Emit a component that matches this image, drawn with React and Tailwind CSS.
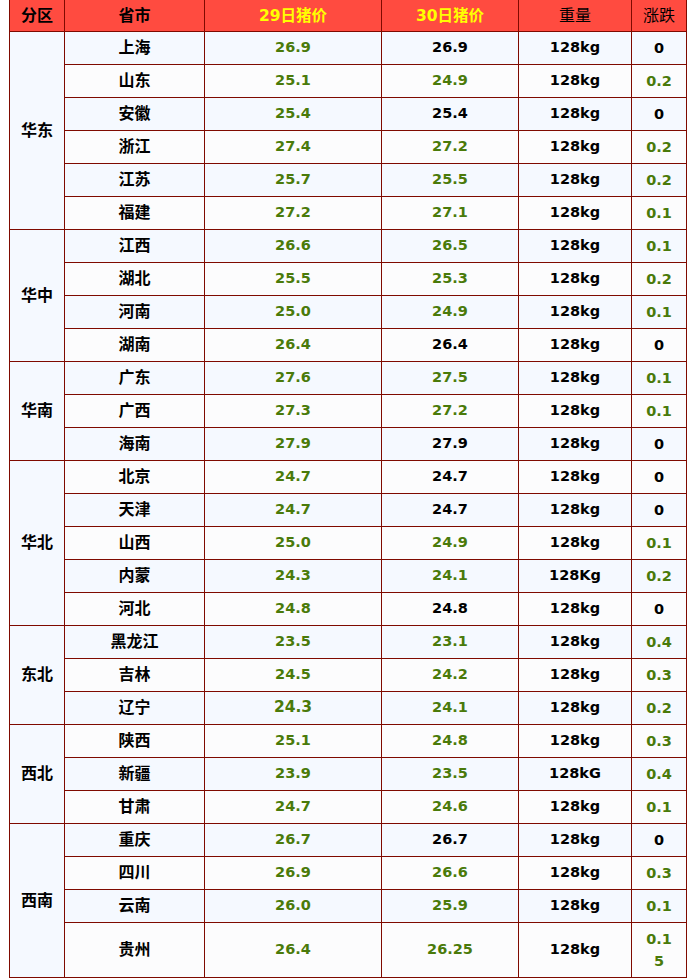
import React from "react";

const rows = [
  ["华东", 6, [
    ["上海", "26.9", "26.9", "128kg", "0", 0],
    ["山东", "25.1", "24.9", "128kg", "0.2", 1],
    ["安徽", "25.4", "25.4", "128kg", "0", 0],
    ["浙江", "27.4", "27.2", "128kg", "0.2", 1],
    ["江苏", "25.7", "25.5", "128kg", "0.2", 1],
    ["福建", "27.2", "27.1", "128kg", "0.1", 1],
  ]],
  ["华中", 4, [
    ["江西", "26.6", "26.5", "128kg", "0.1", 1],
    ["湖北", "25.5", "25.3", "128kg", "0.2", 1],
    ["河南", "25.0", "24.9", "128kg", "0.1", 1],
    ["湖南", "26.4", "26.4", "128kg", "0", 0],
  ]],
  ["华南", 3, [
    ["广东", "27.6", "27.5", "128kg", "0.1", 1],
    ["广西", "27.3", "27.2", "128kg", "0.1", 1],
    ["海南", "27.9", "27.9", "128kg", "0", 0],
  ]],
  ["华北", 5, [
    ["北京", "24.7", "24.7", "128kg", "0", 0],
    ["天津", "24.7", "24.7", "128kg", "0", 0],
    ["山西", "25.0", "24.9", "128kg", "0.1", 1],
    ["内蒙", "24.3", "24.1", "128Kg", "0.2", 1],
    ["河北", "24.8", "24.8", "128kg", "0", 0],
  ]],
  ["东北", 3, [
    ["黑龙江", "23.5", "23.1", "128kg", "0.4", 1],
    ["吉林", "24.5", "24.2", "128kg", "0.3", 1],
    ["辽宁", "24.3", "24.1", "128kg", "0.2", 1],
  ]],
  ["西北", 3, [
    ["陕西", "25.1", "24.8", "128kg", "0.3", 1],
    ["新疆", "23.9", "23.5", "128kG", "0.4", 1],
    ["甘肃", "24.7", "24.6", "128kg", "0.1", 1],
  ]],
  ["西南", 4, [
    ["重庆", "26.7", "26.7", "128kg", "0", 0],
    ["四川", "26.9", "26.6", "128kg", "0.3", 1],
    ["云南", "26.0", "25.9", "128kg", "0.1", 1],
    ["贵州", "26.4", "26.25", "128kg", "0.15", 1],
  ]],
];

const font = { fontFamily: '"DejaVu Sans", "Noto Sans CJK SC", sans-serif' };

export default function App() {
  let idx = 0;
  const body = [];
  rows.forEach(([region, span, items]) => {
    items.forEach((r, i) => {
      const even = idx % 2 === 0;
      const bg = even ? "bg-[#f5f9ff]" : "bg-[#fcfcfd]";
      const last = r[0] === "贵州";
      const h = last ? "h-[55px]" : "h-[33px]";
      body.push(
        <tr key={r[0]} className={`${bg} ${h}`}>
          {i === 0 && (
            <td rowSpan={span} className="border border-[#7f0a00] text-center text-[16px] font-bold text-black bg-[#f5f9ff] pt-[1px]">
              {region}
            </td>
          )}
          <td className="border border-[#7f0a00] text-center text-[16px] font-bold text-black pt-[1px]">{r[0]}</td>
          <td className={`border border-[#7f0a00] text-center font-bold text-[#4a7a0a] pt-[1px] ${r[0] === "辽宁" ? "text-[15.5px]" : "text-[14.5px]"}`}>{r[1]}</td>
          <td className={`border border-[#7f0a00] text-center text-[14.5px] font-bold pt-[1px] ${r[5] ? "text-[#4a7a0a]" : "text-black"}`}>{r[2]}</td>
          <td className="border border-[#7f0a00] text-center text-[14.5px] font-bold text-black pt-[1px]">{r[3]}</td>
          <td className={`border border-[#7f0a00] text-center text-[14.5px] font-bold leading-[22px] pt-[1px] ${r[5] ? "text-[#4a7a0a]" : "text-black"}`}>
            {last ? (<>0.1<br />5</>) : r[4]}
          </td>
        </tr>
      );
      idx++;
    });
  });

  return (
    <div className="w-[689px] h-[980px] bg-white pl-[9px]" style={font}>
      <table className="border-collapse table-fixed w-[677px]">
        <colgroup>
          <col className="w-[55px]" />
          <col className="w-[140px]" />
          <col className="w-[177px]" />
          <col className="w-[137px]" />
          <col className="w-[113px]" />
          <col className="w-[55px]" />
        </colgroup>
        <thead>
          <tr className="h-[31px] bg-[#ff4b40]">
            <th className="border-x border-b border-[#7f0a00] text-[16px] font-bold text-black pt-[2px]">分区</th>
            <th className="border-x border-b border-[#7f0a00] text-[16px] font-semibold text-black pt-[2px]">省市</th>
            <th className="border-x border-b border-[#7f0a00] text-[15.5px] font-bold text-[#ffff00] pt-[2px]">29日猪价</th>
            <th className="border-x border-b border-[#7f0a00] text-[15.5px] font-bold text-[#ffff00] pt-[2px]">30日猪价</th>
            <th className="border-x border-b border-[#7f0a00] text-[16px] font-normal text-black pt-[2px]">重量</th>
            <th className="border-x border-b border-[#7f0a00] text-[16px] font-normal text-black pt-[2px]">涨跌</th>
          </tr>
        </thead>
        <tbody>{body}</tbody>
      </table>
    </div>
  );
}
